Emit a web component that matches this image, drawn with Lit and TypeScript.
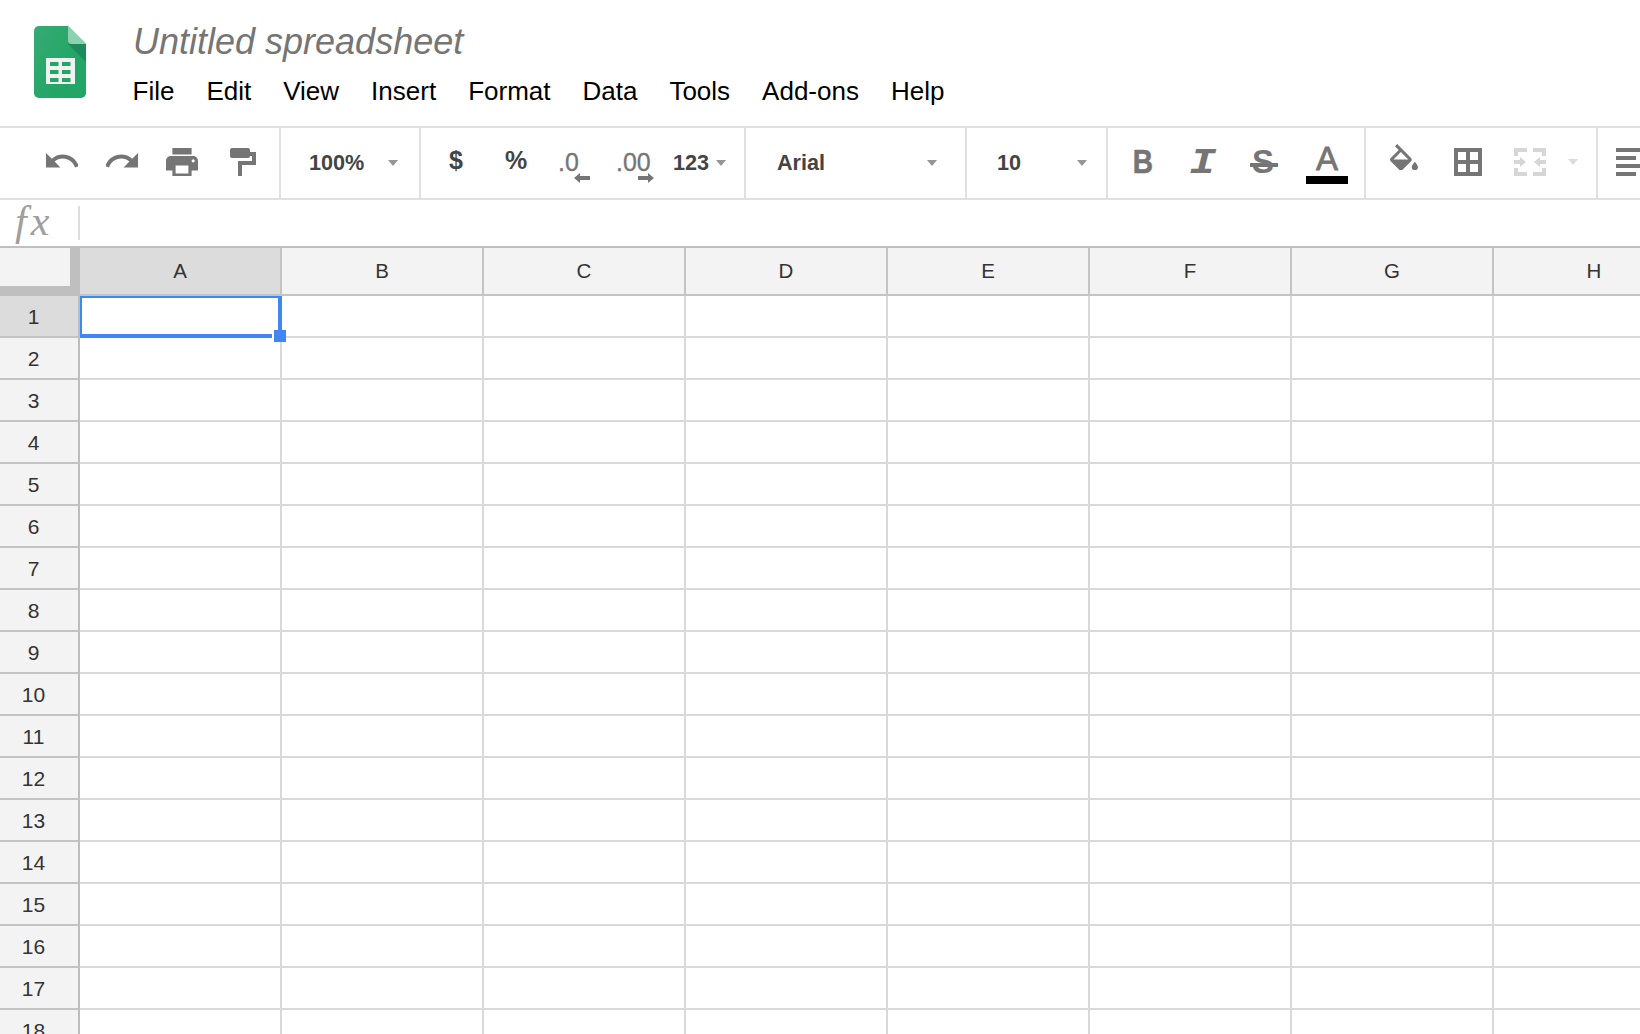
import { LitElement, html, css, svg } from "lit";
import { customElement } from "lit/decorators.js";

const ROWS = Array.from({ length: 18 }, (_, i) => i + 1);
const COLS = ["A", "B", "C", "D", "E", "F", "G", "H"];

@customElement("app-root")
export class AppRoot extends LitElement {
  static styles = css`
    :host { display: block; width: 1640px; height: 1034px; overflow: hidden; background: #fff; font-family: "Liberation Sans", Arial, sans-serif; }
    .header { display: flex; height: 126px; border-bottom: 2px solid #e0e0e0; }
    .logo { width: 52px; height: 72px; margin: 26px 0 0 34px; flex: none; }
    .titles { margin-left: 46.500px; padding-top: 22px; }
    .title { font-size: 36px; line-height: 40px; font-style: italic; color: #757575; padding-left: 0.500px; }
    .menu { display: flex; gap: 32px; margin-top: 14px; font-size: 26px; line-height: 30px; color: #000; }

    .toolbar { display: flex; height: 70px; border-bottom: 2px solid #e0e0e0; overflow: hidden; }
    .group { display: flex; align-items: center; height: 70px; box-sizing: border-box; border-right: 2px solid #e0e0e0; padding-bottom: 2px; flex: none; font-size: 21.6px; font-weight: bold; color: #444; }
    .between { justify-content: space-between; padding-top: 1px; }
    .g1 { width: 281px; padding-left: 32px; }
    .g2 { width: 140px; padding-left: 28px; padding-right: 21px; }
    .g3 { width: 325px; padding-left: 5px; }
    .g4 { width: 221px; padding-left: 31px; padding-right: 28px; }
    .g5 { width: 141px; padding-left: 30px; padding-right: 19px; }
    .g6 { width: 258px; padding-left: 5px; }
    .g7 { width: 232px; padding-left: 6px; }
    .g8 { border-right: 0; padding-left: 18px; }
    .tool { width: 60px; height: 60px; display: flex; align-items: center; justify-content: center; flex: none; position: relative; }
    .wide { width: 64px; }
    .ico { display: block; fill: #757575; }
    .undo { margin-top: -3px; }
    .bucket { margin-top: -10px; }
    .roller { margin-left: 2px; }
    .arrow { width: 0; height: 0; border-left: 5.5px solid transparent; border-right: 5.5px solid transparent; border-top: 6px solid #959595; flex: none; }
    .arrow.off { border-top-color: #dcdcdc; margin-left: 8px; }
    .num { margin: 1px 0 0 7px; }
    .num + .arrow { margin: 1px 0 0 7px; }
    .sym { font-size: 25px; color: #444; padding-bottom: 3px; box-sizing: border-box; }
    .dec { display: flex; flex-direction: column; align-items: flex-start; justify-content: flex-start; font-size: 25px; font-weight: normal; color: #757575; -webkit-text-stroke: 0.3px #757575; line-height: 20px; padding-top: 20px; box-sizing: border-box; height: 60px; }
    .dec svg { margin-top: 1px; }
    .d1 { padding-left: 12px; }
    .d1 svg { margin-left: 16px; }
    .d2 { padding-left: 10px; }
    .d2 svg { margin-left: 22px; }
    .fmt { color: #757575; font-weight: bold; line-height: 30px; }
    .b { font-size: 33px; transform: scaleX(0.85); -webkit-text-stroke: 0.6px #757575; }
    .i { font-family: "Liberation Mono", monospace; font-style: italic; font-size: 36px; transform: scaleX(1.25); margin-top: 4px; }
    .s { font-size: 33px; }
    .strike { position: absolute; left: 17px; top: 31px; width: 28px; height: 4px; background: #757575; }
    .a { font-size: 33px; font-weight: normal; -webkit-text-stroke: 0.8px #757575; margin-top: -7px; }
    .shift { margin-left: 4px; }
    .bar { position: absolute; left: 9px; top: 44px; width: 42px; height: 8px; background: #000; }

    .formula { display: flex; align-items: center; height: 46px; border-bottom: 2px solid #c0c0c0; }
    .fx { width: 78px; box-sizing: border-box; padding: 0 0 4px 15px; font-family: "Liberation Serif", serif; font-style: italic; font-size: 42px; line-height: 46px; color: #9e9e9e; letter-spacing: 4px; }
    .fsep { width: 2px; height: 34px; background: #dcdcdc; }

    .grid { display: grid; grid-template-columns: 80px repeat(8, 202px); grid-auto-rows: 42px; grid-template-rows: 48px; }
    .cell { box-sizing: border-box; border-right: 2px solid #d9d9d9; border-bottom: 2px solid #d9d9d9; position: relative; }
    .top { z-index: 1; }
    .hd { display: flex; align-items: center; justify-content: center; background: #f3f3f3; font-size: 20.5px; color: #333; border-color: #c4c4c4; }
    .rh { border-right-color: #bdbdbd; font-size: 21px; padding: 1px 11px 0 0; }
    .corner { box-sizing: border-box; background: #f3f3f3; border-right: 10px solid #bfbfbf; border-bottom: 10px solid #bfbfbf; }
    .on { background: #dcdcdc; }
    .sel { position: absolute; left: 0; top: 0; right: -2px; bottom: -2px; box-sizing: border-box; border: solid #4285f4; border-width: 2px 4px 4px 2px; }
    .handle { position: absolute; right: -8px; bottom: -8px; width: 12px; height: 12px; background: #4285f4; box-shadow: -2px 0 0 #fff; }
  `;

  private icon(w: number, h: number, vb: string, body: unknown, cls = "") {
    return html`<svg class="ico ${cls}" width=${w} height=${h} viewBox=${vb}>${body}</svg>`;
  }

  private logo() {
    return html`<svg class="logo" viewBox="0 0 52 72">
      <defs><linearGradient id="g" x1="0" y1="0" x2="0.7" y2="0.6"><stop offset="0" stop-color="#36ab74"/><stop offset="1" stop-color="#23a566"/></linearGradient></defs>
      <path d="M5 0h29l18 18v49a5 5 0 0 1-5 5H5a5 5 0 0 1-5-5V5a5 5 0 0 1 5-5z" fill="url(#g)"/>
      <path d="M34 18l18 18V18z" fill="#1f8a5c"/>
      <path d="M34 0l18 18H38a4 4 0 0 1-4-4z" fill="#8ed1b1"/>
      <rect x="12" y="32" width="29" height="26" fill="#f1f1f1"/>
      <g fill="#23a566">
        <rect x="16" y="36" width="8.500" height="4"/><rect x="28" y="36" width="8.500" height="4"/>
        <rect x="16" y="44" width="8.500" height="4"/><rect x="28" y="44" width="8.500" height="4"/>
        <rect x="16" y="52" width="8.500" height="4"/><rect x="28" y="52" width="8.500" height="4"/>
      </g>
    </svg>`;
  }

  private toolbar() {
    return html`<div class="toolbar">
      <div class="group g1">
        <div class="tool">${this.icon(32, 14.400, "2 7 20 9", svg`<path d="M12.5 8c-2.65 0-5.05.99-6.9 2.6L2 7v9h9l-3.62-3.62c1.39-1.16 3.16-1.88 5.12-1.88 3.54 0 6.55 2.31 7.6 5.5l2.37-.78C21.08 11.03 17.15 8 12.5 8z"/>`, "undo")}</div>
        <div class="tool">${this.icon(32, 14.400, "2 7 20 9", svg`<path d="M18.4 10.6C16.55 8.99 14.15 8 11.5 8c-4.65 0-8.58 3.03-9.96 7.22L3.9 16c1.05-3.19 4.05-5.5 7.6-5.500 1.95 0 3.73.72 5.12 1.88L13 16h9V7l-3.6 3.6z"/>`, "undo")}</div>
        <div class="tool">${this.icon(32, 28.800, "2 3 20 18", svg`<path d="M19 8H5c-1.66 0-3 1.34-3 3v6h4v4h12v-4h4v-6c0-1.66-1.34-3-3-3zm-3 11H8v-5h8v5zm3-7c-.55 0-1-.45-1-1s.45-1 1-1 1 .45 1 1-.45 1-1 1zm-1-9H6v4h12V3z"/>`)}</div>
        <div class="tool">${this.icon(26, 28, "0 0 26 28", svg`<rect width="20" height="10" rx="2"/><path d="M20 4h6v13H12v11H8V13h14V8h-2z"/>`, "roller")}</div>
      </div>
      <div class="group g2 between"><span>100%</span><span class="arrow"></span></div>
      <div class="group g3">
        <div class="tool sym">$</div>
        <div class="tool sym">%</div>
        <div class="tool dec d1"><span>.0</span>${this.icon(16, 10, "0 0 16 10", svg`<path d="M6 0L0 5l6 5V7h10V3H6z"/>`)}</div>
        <div class="tool dec d2"><span>.00</span>${this.icon(16, 10, "0 0 16 10", svg`<path d="M10 0l6 5-6 5V7H0V3h10z"/>`)}</div>
        <span class="num">123</span><span class="arrow"></span>
      </div>
      <div class="group g4 between"><span>Arial</span><span class="arrow"></span></div>
      <div class="group g5 between"><span>10</span><span class="arrow"></span></div>
      <div class="group g6">
        <div class="tool"><span class="fmt b">B</span></div>
        <div class="tool"><span class="fmt i">I</span></div>
        <div class="tool"><span class="fmt s">S</span><span class="strike"></span></div>
        <div class="tool shift"><span class="fmt a">A</span><span class="bar"></span></div>
      </div>
      <div class="group g7">
        <div class="tool wide">${this.icon(28, 26.400, "3 0 18 17", svg`<path d="M16.56 8.94L7.62 0 6.21 1.41l2.38 2.38-5.15 5.15c-.59.59-.59 1.54 0 2.12l5.5 5.5c.29.29.68.44 1.06.44s.77-.15 1.06-.44l5.5-5.5c.59-.58.59-1.53 0-2.12zM5.21 10L10 5.21 14.79 10H5.21zM19 11.5s-2 2.17-2 3.5c0 1.1.9 2 2 2s2-.9 2-2c0-1.33-2-3.5-2-3.5z"/>`, "bucket")}</div>
        <div class="tool wide">${this.icon(28, 28, "0 0 28 28", svg`<path fill-rule="evenodd" d="M0 0h28v28H0z M4 4v8h8V4z M16 4v8h8V4z M4 16v8h8v-8z M16 16v8h8v-8z"/>`)}</div>
        <div class="tool">${html`<svg width="32" height="28" viewBox="0 0 32 28" fill="#d6d6d6"><path d="M0 0h13v4H4v4H0z M19 0h13v8h-4V4h-9z M0 20h4v4h9v4H0z M28 20h4v8H19v-4h9z M0 12h6V9l6 5-6 5v-3H0z M32 12h-6V9l-6 5 6 5v-3h6z"/></svg>`}</div>
        <span class="arrow off"></span>
      </div>
      <div class="group g8">${this.icon(28, 28, "0 0 28 28", svg`<rect width="28" height="4"/><rect y="8" width="20" height="4"/><rect y="16" width="28" height="4"/><rect y="24" width="20" height="4"/>`)}</div>
    </div>`;
  }

  private grid() {
    return html`<div class="grid">
      <div class="corner"></div>
      ${COLS.map((c, i) => html`<div class="cell hd ${i === 0 ? "on" : ""}">${c}</div>`)}
      ${ROWS.map(
        (r) => html`<div class="cell hd rh ${r === 1 ? "on" : ""}">${r}</div>
          ${COLS.map((_, i) =>
            r === 1 && i === 0
              ? html`<div class="cell top"><div class="sel"><div class="handle"></div></div></div>`
              : html`<div class="cell"></div>`
          )}`
      )}
    </div>`;
  }

  render() {
    return html`
      <div class="header">
        ${this.logo()}
        <div class="titles">
          <div class="title">Untitled spreadsheet</div>
          <div class="menu">
            ${["File", "Edit", "View", "Insert", "Format", "Data", "Tools", "Add-ons", "Help"].map((m) => html`<span>${m}</span>`)}
          </div>
        </div>
      </div>
      ${this.toolbar()}
      <div class="formula"><div class="fx">fx</div><div class="fsep"></div></div>
      ${this.grid()}
    `;
  }
}
